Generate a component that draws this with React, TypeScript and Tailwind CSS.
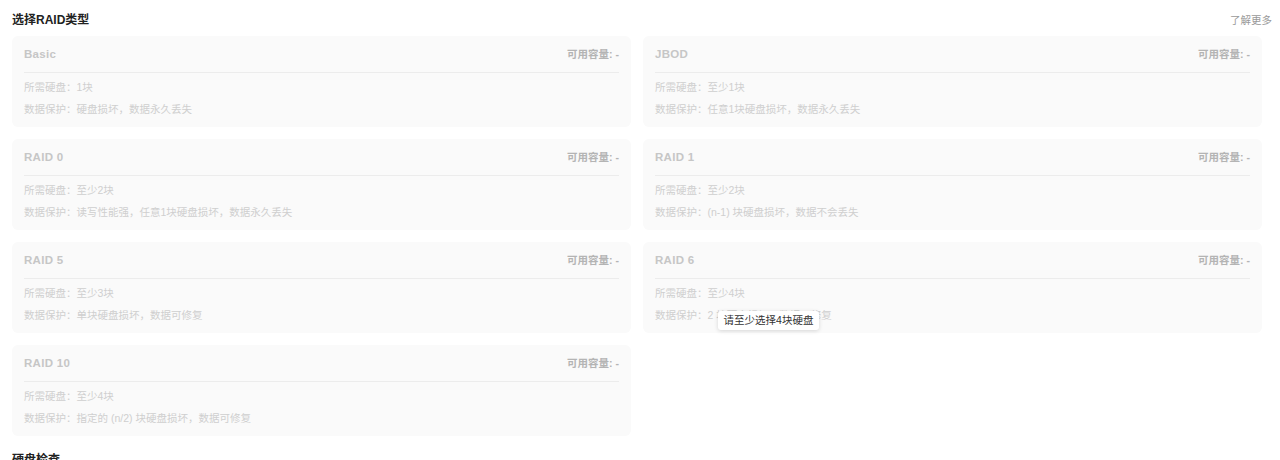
import React from "react";

type Item = { name: string; disks: string; protect: string };

const items: Item[] = [
  { name: "Basic", disks: "所需硬盘：1块", protect: "数据保护：硬盘损坏，数据永久丢失" },
  { name: "JBOD", disks: "所需硬盘：至少1块", protect: "数据保护：任意1块硬盘损坏，数据永久丢失" },
  { name: "RAID 0", disks: "所需硬盘：至少2块", protect: "数据保护：读写性能强，任意1块硬盘损坏，数据永久丢失" },
  { name: "RAID 1", disks: "所需硬盘：至少2块", protect: "数据保护：(n-1) 块硬盘损坏，数据不会丢失" },
  { name: "RAID 5", disks: "所需硬盘：至少3块", protect: "数据保护：单块硬盘损坏，数据可修复" },
  { name: "RAID 6", disks: "所需硬盘：至少4块", protect: "数据保护：2 块硬盘损坏，数据可修复" },
  { name: "RAID 10", disks: "所需硬盘：至少4块", protect: "数据保护：指定的 (n/2) 块硬盘损坏，数据可修复" },
];

function Card({ item }: { item: Item }) {
  return (
    <div className="relative rounded-md bg-[#fafafa] px-3">
      <div className="flex h-[37px] items-center justify-between border-b border-[#ececec] pt-[2px]">
        <span className="text-[11.5px] font-bold tracking-[0.3px] text-[#c6c6c6]">{item.name}</span>
        <span className="text-[10.5px] font-bold text-[#b4b4b4]">可用容量: -</span>
      </div>
      <div className="pt-[3px] pb-[7px] text-[10.5px] leading-[22px] text-[#cfcfcf]">
        <div>{item.disks}</div>
        <div>{item.protect}</div>
      </div>
      {item.name === "RAID 6" && (
        <div className="absolute left-[75px] top-[69px] flex h-[19px] w-[101px] items-center justify-center rounded-[3px] bg-white text-[10.5px] text-[#333] shadow-[0_1px_4px_rgba(0,0,0,0.15)]">
          请至少选择4块硬盘
        </div>
      )}
    </div>
  );
}

export default function App() {
  return (
    <div
      className="h-[460px] w-[1280px] overflow-hidden bg-white pl-3 pt-[13px]"
      style={{ fontFamily: '"Liberation Sans", "Noto Sans CJK SC", sans-serif' }}
    >
      <div className="flex w-[1260px] items-center justify-between">
        <span className="text-[12px] font-bold leading-[14px] text-[#222]">选择RAID类型</span>
        <span className="text-[10.5px] leading-[14px] text-[#9a9a9a]">了解更多</span>
      </div>
      <div className="mt-[9px] grid w-[1250px] grid-cols-2 gap-3">
        {items.map((it) => (
          <Card key={it.name} item={it} />
        ))}
      </div>
      <div className="mt-[17px] text-[12px] font-bold leading-[14px] text-[#222]">硬盘检查</div>
    </div>
  );
}
